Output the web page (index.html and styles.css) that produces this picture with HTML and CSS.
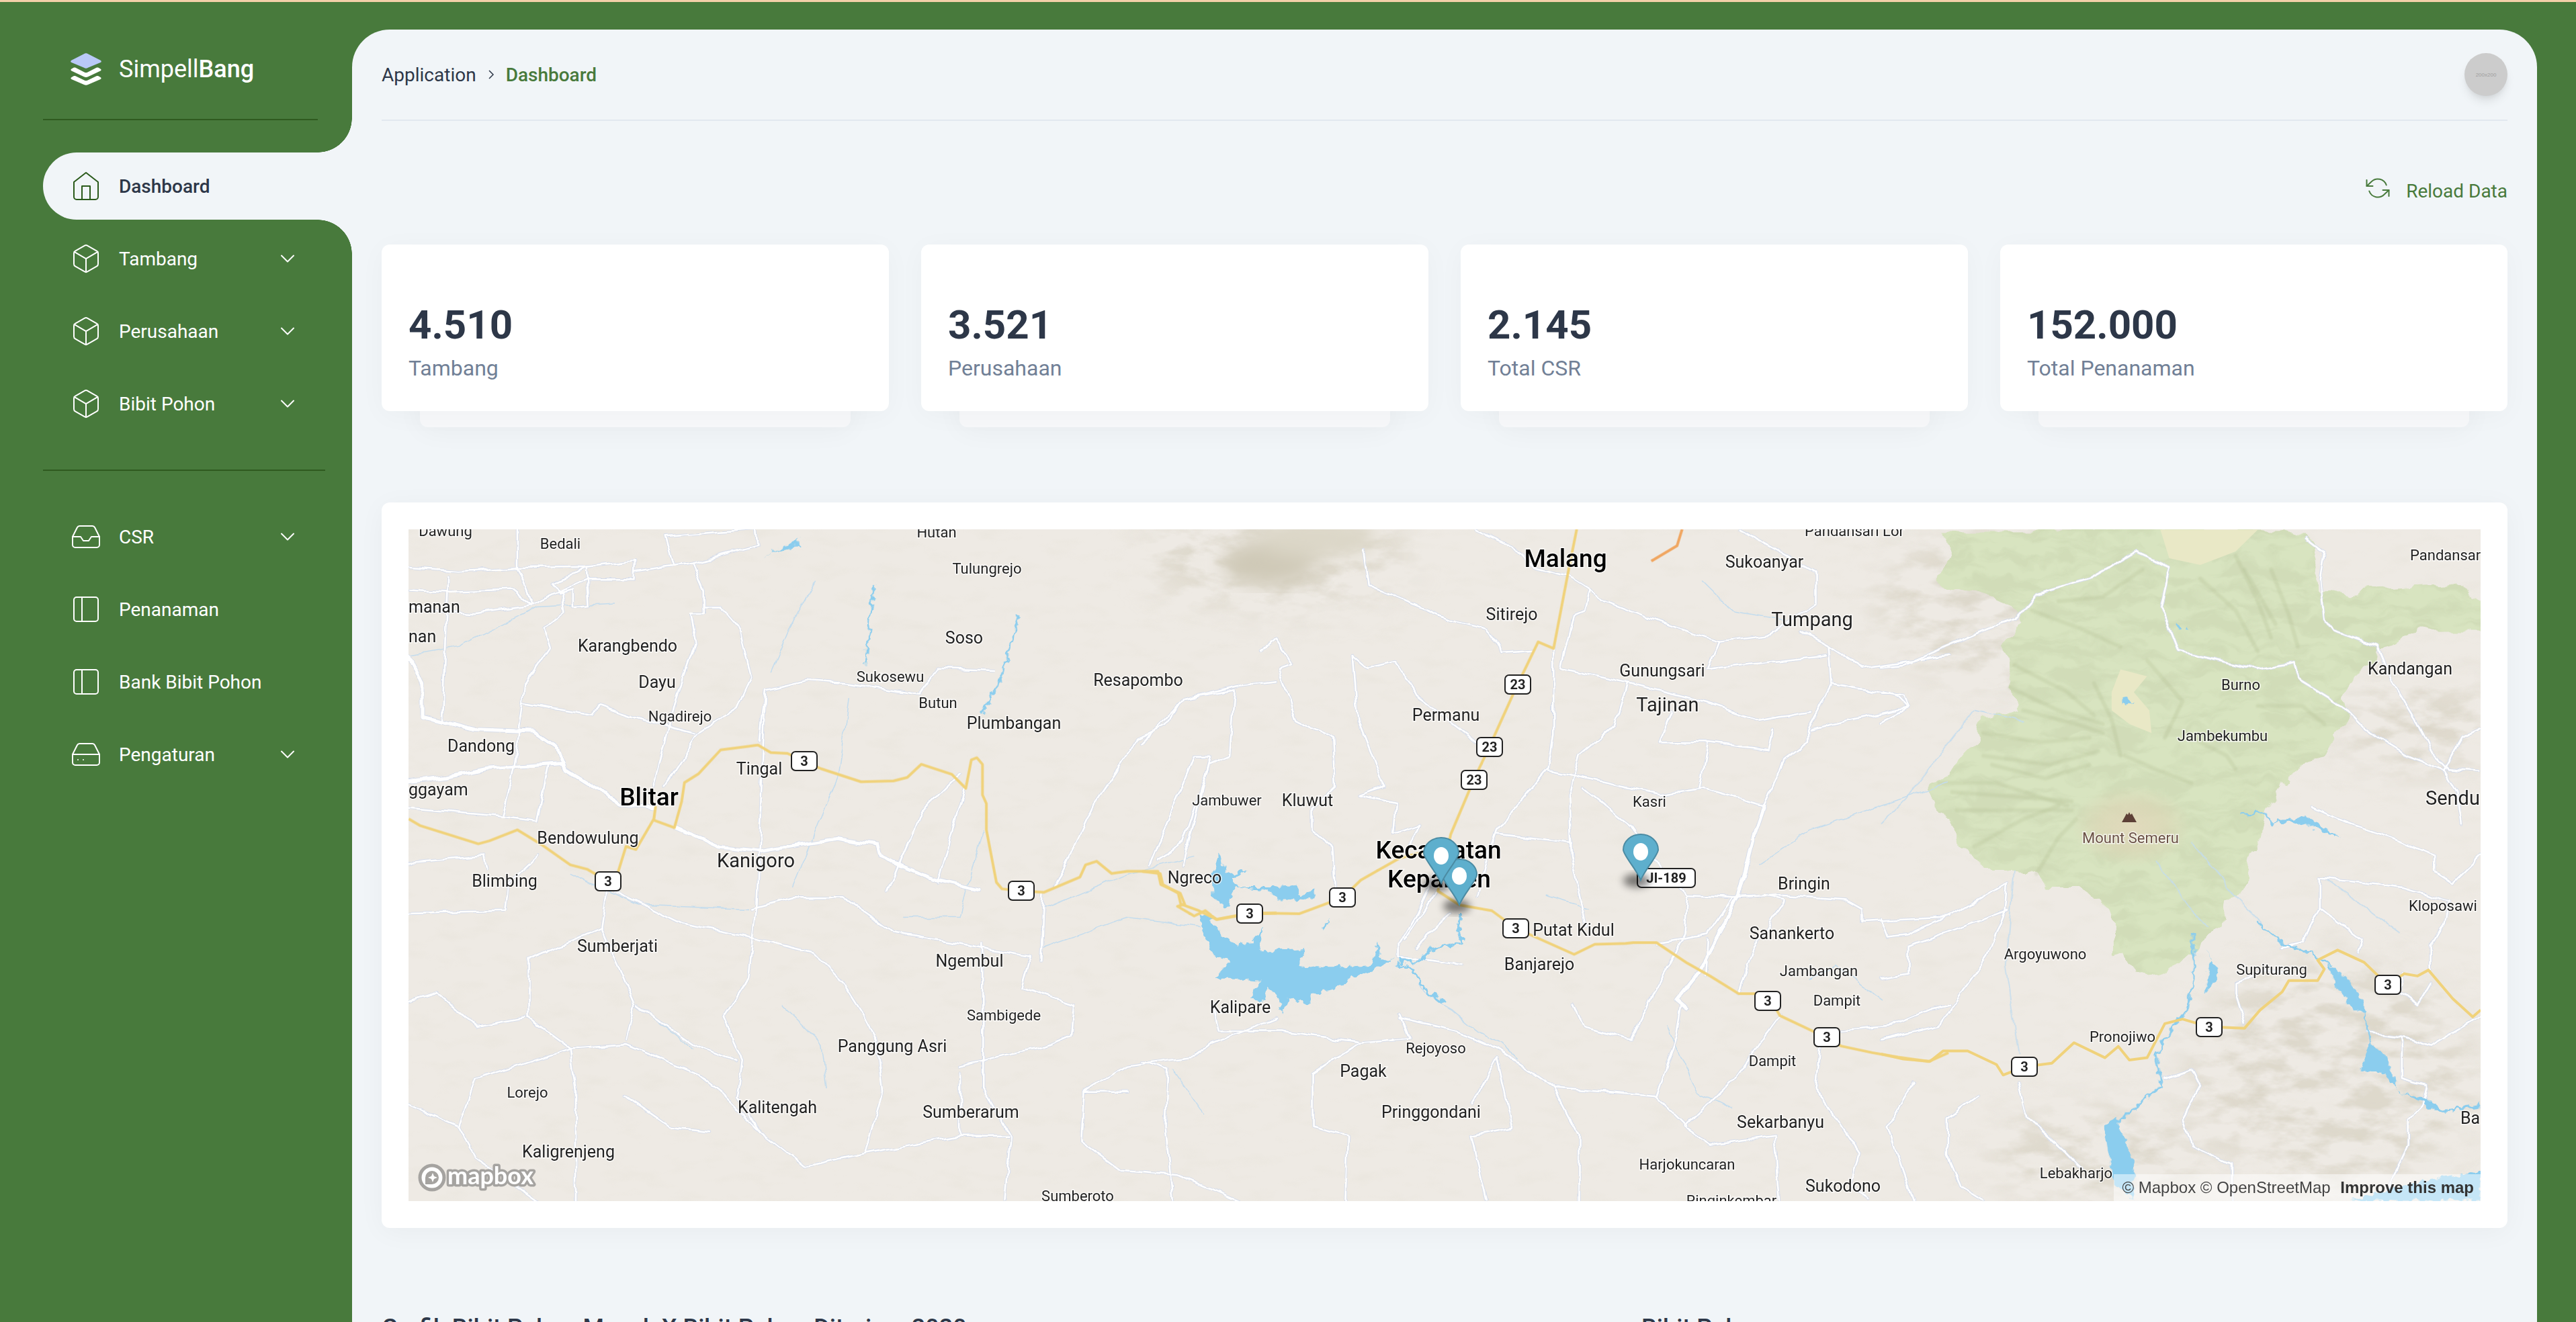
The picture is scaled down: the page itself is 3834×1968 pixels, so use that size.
FILE: index.html
```html
<!DOCTYPE html>
<html lang="en">
<head>
  <meta charset="UTF-8" />
  <meta name="viewport" content="width=device-width, initial-scale=1.0"/>
  <title>SimpellBang - Dashboard</title>
  <link rel="stylesheet" href="styles.css">
</head>
<body>

<aside class="sidebar">
  <div class="logo">
    <svg class="logo-mark" viewBox="0 0 48 48">
      <path class="logo-top" d="M21 1.2a6 6 0 0 1 6 0l18.6 9.6c1.6.9 1.6 2.4 0 3.300L27 21.800a6 6 0 0 1-6 0L2.400 14.100c-1.600-.9-1.600-2.400 0-3.300z"/>
      <path d="M2.500 23.500l3-1.700c1-.5 2-.5 3 0l13.500 7c1.300.6 2.700.6 4 0l13.500-7c1-.5 2-.5 3 0l3 1.700c1.500.9 1.500 2.200 0 3L27 35.200a6.500 6.500 0 0 1-6 0L2.500 26.500c-1.500-.8-1.500-2.100 0-3z"/>
      <path d="M2.500 36l3-1.700c1-.5 2-.5 3 0l13.500 6.500c1.300.6 2.700.6 4 0l13.500-6.500c1-.5 2-.5 3 0l3 1.700c1.500.9 1.500 2.200 0 3L27 47a6.500 6.500 0 0 1-6 0L2.500 39c-1.500-.8-1.500-2.100 0-3z"/>
    </svg>
    <span class="logo-text">Simpell<b>Bang</b></span>
  </div>

  <ul class="nav">
    <li class="nav-item active">
      <svg class="nav-icon" viewBox="0 0 24 24"><path d="M3 9l9-7 9 7v11a2 2 0 0 1-2 2H5a2 2 0 0 1-2-2z"/><polyline points="9 22 9 12 15 12 15 22"/></svg>
      <span>Dashboard</span>
    </li>
    <li class="nav-item">
      <svg class="nav-icon" viewBox="0 0 24 24"><path d="M21 16V8a2 2 0 0 0-1-1.730l-7-4a2 2 0 0 0-2 0l-7 4A2 2 0 0 0 3 8v8a2 2 0 0 0 1 1.730l7 4a2 2 0 0 0 2 0l7-4A2 2 0 0 0 21 16z"/><polyline points="3.270 6.960 12 12.010 20.730 6.960"/><line x1="12" y1="22.080" x2="12" y2="12"/></svg>
      <span>Tambang</span>
      <svg class="nav-arrow" viewBox="0 0 24 24"><polyline points="6 9 12 15 18 9"/></svg>
    </li>
    <li class="nav-item">
      <svg class="nav-icon" viewBox="0 0 24 24"><path d="M21 16V8a2 2 0 0 0-1-1.730l-7-4a2 2 0 0 0-2 0l-7 4A2 2 0 0 0 3 8v8a2 2 0 0 0 1 1.730l7 4a2 2 0 0 0 2 0l7-4A2 2 0 0 0 21 16z"/><polyline points="3.270 6.960 12 12.010 20.730 6.960"/><line x1="12" y1="22.080" x2="12" y2="12"/></svg>
      <span>Perusahaan</span>
      <svg class="nav-arrow" viewBox="0 0 24 24"><polyline points="6 9 12 15 18 9"/></svg>
    </li>
    <li class="nav-item">
      <svg class="nav-icon" viewBox="0 0 24 24"><path d="M21 16V8a2 2 0 0 0-1-1.730l-7-4a2 2 0 0 0-2 0l-7 4A2 2 0 0 0 3 8v8a2 2 0 0 0 1 1.730l7 4a2 2 0 0 0 2 0l7-4A2 2 0 0 0 21 16z"/><polyline points="3.270 6.960 12 12.010 20.730 6.960"/><line x1="12" y1="22.080" x2="12" y2="12"/></svg>
      <span>Bibit Pohon</span>
      <svg class="nav-arrow" viewBox="0 0 24 24"><polyline points="6 9 12 15 18 9"/></svg>
    </li>
  </ul>

  <div class="nav-divider"></div>

  <ul class="nav">
    <li class="nav-item">
      <svg class="nav-icon" viewBox="0 0 24 24"><polyline points="22 12 16 12 14 15 10 15 8 12 2 12"/><path d="M5.450 5.110L2 12v6a2 2 0 0 0 2 2h16a2 2 0 0 0 2-2v-6l-3.450-6.890A2 2 0 0 0 16.760 4H7.240a2 2 0 0 0-1.790 1.110z"/></svg>
      <span>CSR</span>
      <svg class="nav-arrow" viewBox="0 0 24 24"><polyline points="6 9 12 15 18 9"/></svg>
    </li>
    <li class="nav-item">
      <svg class="nav-icon" viewBox="0 0 24 24"><rect x="3" y="3" width="18" height="18" rx="2" ry="2"/><line x1="9" y1="3" x2="9" y2="21"/></svg>
      <span>Penanaman</span>
    </li>
    <li class="nav-item">
      <svg class="nav-icon" viewBox="0 0 24 24"><rect x="3" y="3" width="18" height="18" rx="2" ry="2"/><line x1="9" y1="3" x2="9" y2="21"/></svg>
      <span>Bank Bibit Pohon</span>
    </li>
    <li class="nav-item">
      <svg class="nav-icon" viewBox="0 0 24 24"><line x1="22" y1="12" x2="2" y2="12"/><path d="M5.450 5.110L2 12v6a2 2 0 0 0 2 2h16a2 2 0 0 0 2-2v-6l-3.450-6.890A2 2 0 0 0 16.760 4H7.240a2 2 0 0 0-1.790 1.110z"/><line x1="6" y1="16" x2="6.010" y2="16"/><line x1="10" y1="16" x2="10.010" y2="16"/></svg>
      <span>Pengaturan</span>
      <svg class="nav-arrow" viewBox="0 0 24 24"><polyline points="6 9 12 15 18 9"/></svg>
    </li>
  </ul>
</aside>

<main class="content">
  <div class="topbar">
    <div class="breadcrumb">
      <span>Application</span>
      <svg class="crumb-sep" viewBox="0 0 24 24"><polyline points="9 18 15 12 9 6"/></svg>
      <span class="crumb-active">Dashboard</span>
    </div>
    <div class="avatar">200x200</div>
  </div>

  <div class="reload-row">
    <svg class="reload-icon" viewBox="0 0 24 24"><polyline points="1 4 1 10 7 10"/><polyline points="23 20 23 14 17 14"/><path d="M20.490 9A9 9 0 0 0 5.640 5.640L1 10m22 4l-4.640 4.360A9 9 0 0 1 3.510 15"/></svg>
    <span>Reload Data</span>
  </div>

  <div class="stats">
    <div class="stat"><div class="stat-card"><div class="stat-num">4.510</div><div class="stat-label">Tambang</div></div></div>
    <div class="stat"><div class="stat-card"><div class="stat-num">3.521</div><div class="stat-label">Perusahaan</div></div></div>
    <div class="stat"><div class="stat-card"><div class="stat-num">2.145</div><div class="stat-label">Total CSR</div></div></div>
    <div class="stat"><div class="stat-card"><div class="stat-num">152.000</div><div class="stat-label">Total Penanaman</div></div></div>
  </div>

  <div class="map-card">
    <div class="map">
      <!-- viewBox is in page pixels, the three road groups are traced per map area -->
      <svg class="map-svg" viewBox="608 788 3084 1000">
        <defs>
          <filter id="mottle" x="0" y="0" width="100%" height="100%">
            <feTurbulence type="fractalNoise" baseFrequency="0.02 0.05" numOctaves="3" seed="7"/>
            <feColorMatrix values="0 0 0 0 .72  0 0 0 0 .69  0 0 0 0 .58  3 0 0 0 -1.500"/>
          </filter>
          <filter id="mottle-hill" x="0" y="0" width="100%" height="100%">
            <feTurbulence type="fractalNoise" baseFrequency="0.018 0.04" numOctaves="4" seed="21"/>
            <feColorMatrix values="0 0 0 0 .58  0 0 0 0 .54  0 0 0 0 .42  3.600 0 0 0 -1.500"/>
          </filter>
          <filter id="mottle-forest" x="0" y="0" width="100%" height="100%">
            <feTurbulence type="fractalNoise" baseFrequency="0.016 0.05" numOctaves="4" seed="11"/>
            <feColorMatrix values="0 0 0 0 .55  0 0 0 0 .62  0 0 0 0 .40  4 0 0 0 -1.650"/>
          </filter>
          <filter id="wobble-sm" filterUnits="userSpaceOnUse" x="608" y="788" width="3084" height="1000">
            <feTurbulence type="fractalNoise" baseFrequency="0.035" numOctaves="2" seed="4"/>
            <feDisplacementMap in="SourceGraphic" scale="11" xChannelSelector="R" yChannelSelector="G"/>
          </filter>
          <filter id="wobble-water" filterUnits="userSpaceOnUse" x="608" y="788" width="3084" height="1000">
            <feTurbulence type="fractalNoise" baseFrequency="0.09" numOctaves="2" seed="9"/>
            <feDisplacementMap in="SourceGraphic" scale="14" xChannelSelector="R" yChannelSelector="G"/>
          </filter>
          <filter id="wobble-lg" filterUnits="userSpaceOnUse" x="608" y="788" width="3084" height="1000">
            <feTurbulence type="fractalNoise" baseFrequency="0.025" numOctaves="3" seed="3"/>
            <feDisplacementMap in="SourceGraphic" scale="32" xChannelSelector="R" yChannelSelector="G"/>
          </filter>
          <filter id="blur-lg"><feGaussianBlur stdDeviation="14"/></filter>
          <filter id="blur-mask" filterUnits="userSpaceOnUse" x="608" y="788" width="3084" height="1000"><feGaussianBlur stdDeviation="30"/></filter>
          <filter id="blur-sm"><feGaussianBlur stdDeviation="2"/></filter>
          <filter id="blur-pin"><feGaussianBlur stdDeviation="6"/></filter>
          <radialGradient id="summit">
            <stop offset="0" stop-color="#e2dabd"/>
            <stop offset=".55" stop-color="#dcd6b6" stop-opacity=".7"/>
            <stop offset="1" stop-color="#dcd6b6" stop-opacity="0"/>
          </radialGradient>
          <mask id="hill-mask" maskUnits="userSpaceOnUse" x="608" y="788" width="3084" height="1000">
            <g filter="url(#blur-mask)" fill="white">
              <ellipse cx="1900" cy="830" rx="200" ry="75"/>
              <ellipse cx="3470" cy="1600" rx="210" ry="170"/>
              <ellipse cx="3120" cy="1720" rx="160" ry="70"/>
              <ellipse cx="3010" cy="900" rx="220" ry="120"/>
              <ellipse cx="3600" cy="1080" rx="120" ry="70"/>
            </g>
          </mask>
          <clipPath id="forest-clip">
            <polygon transform="translate(2800 760) scale(.6594 .676)" points="135,42 960,42 990,150 1000,180 1150,170 1300,160 1353,190 1353,270 1200,270 1130,310 1080,350 1040,420 1050,470 1000,530 900,600 870,660 860,720 830,800 780,860 770,910 700,970 640,1020 570,1025 555,960 520,970 520,880 450,830 380,830 300,790 220,790 170,720 130,670 105,620 215,510 215,460 310,440 290,360 270,300 320,240 240,190 130,155 160,100"/>
          </clipPath>
          <symbol id="pin" overflow="visible">
            <path d="M0 0C-6-15-26-37-26-45A26 23 0 1 1 26-45C26-37 6-15 0 0Z"/>
          </symbol>

          <g id="roads-west" transform="translate(600 780) scale(.8291 .6505)">
            <polyline points="10,100 100,108 210,100 330,98 415,85 413,125 330,125 230,185 130,205 70,200 10,190"/>
            <polyline points="10,150 85,155 195,150 230,185"/>
            <polyline points="205,12 205,100 215,130 232,185"/>
            <polyline points="330,98 335,185 305,188 305,150 280,158 270,135 330,98"/>
            <polyline points="415,110 520,90 635,50 632,12 470,28 485,95"/>
            <polyline points="520,90 540,150 540,205 515,205 525,270 490,400 450,600"/>
            <polyline points="540,190 570,190 600,235 605,250 625,350 600,420 530,480 470,600"/>
            <polyline points="80,120 70,450"/>
            <polyline points="215,410 200,550 180,670 240,680 260,550"/>
            <polyline points="10,650 180,670"/>
            <polyline points="220,365 265,280 255,240 290,205 285,160"/>
            <polyline points="220,365 215,410 340,438 350,415 420,445 525,480"/>
            <polyline points="640,500 650,380 725,358 800,365 925,390 960,330 1060,335"/>
            <polyline points="650,390 635,870 620,1040 575,1130 610,1230 600,1310 640,1390"/>
            <polyline points="380,840 500,915 620,945 735,980 790,1050 830,1130 850,1180 860,1300 830,1440"/>
            <polyline points="625,880 700,855 790,855 880,935 1000,960 1125,990 1110,1060 1205,1100 1200,1170 1145,1200 1080,1215 1000,1240"/>
            <polyline points="1040,960 1040,1290 1090,1400 1080,1550"/>
            <polyline points="1150,840 1145,1000"/>
            <polyline points="365,835 355,925 225,995 225,1130 300,1200 310,1300 310,1550"/>
            <polyline points="300,1200 130,1270 100,1380 130,1450 240,1550"/>
            <polyline points="300,1200 400,1190 530,1260 570,1300 640,1390 720,1470"/>
            <polyline points="355,925 385,1010 415,1100 400,1180"/>
            <polyline points="1220,1300 1215,1410 1290,1480 1390,1490 1500,1550"/>
            <polyline points="10,775 145,760 150,790"/>
            <polyline points="10,890 185,885 190,820 240,760"/>
            <polyline points="960,820 1010,600"/>
            <polyline points="870,840 930,660 1000,570"/>
            <polyline points="1170,830 1240,640 1320,490 1370,460 1400,400 1500,370 1568,360"/>
            <polyline points="1340,780 1420,530 1450,530 1400,780"/>
            <polyline points="1000,1255 1000,1400 1085,1400"/>
            <polyline points="1300,1300 1220,1300 1300,1240 1420,1220 1450,1190 1568,1130"/>
            <polyline points="720,1470 830,1440"/>
            <polyline points="10,1090 60,1070 130,1150 220,1130"/>
            <polyline points="10,1330 100,1380"/>
            <polyline points="420,1100 520,1190 600,1230"/>
            <polyline points="400,1310 480,1380 550,1390"/>
            <polyline points="830,1440 1000,1400"/>
          </g>
          <g id="roads-mid" transform="translate(1700 780) scale(.7653 .6505)">
            <polyline points="650,12 720,50 760,100 830,120 870,150 900,175 1020,230 1120,270 1220,255 1310,180 1310,110 1160,12"/>
            <polyline points="870,150 860,200 840,210 815,330 945,365 920,460 850,530 830,620 835,760 865,920"/>
            <polyline points="430,60 440,140 600,220 670,240 700,295 760,290"/>
            <polyline points="800,285 800,480 790,560 690,700 650,850"/>
            <polyline points="1210,645 1250,540 1295,500 1295,470 1340,370 1335,280 1280,245"/>
            <polyline points="1335,280 1400,330 1568,300"/>
            <polyline points="1340,365 1480,395 1490,420 1395,445 1300,470"/>
            <polyline points="1120,270 1100,330 1330,300"/>
            <polyline points="945,365 1100,410 1200,450 1300,430"/>
            <polyline points="1100,500 1085,605"/>
            <polyline points="1100,500 1220,517 1228,470"/>
            <polyline points="1005,500 1030,430"/>
            <polyline points="1005,500 1100,500"/>
            <polyline points="790,565 1010,620 1090,605 1210,645"/>
            <polyline points="860,605 950,690 1010,790 1060,850 1150,855 1250,850 1370,860 1400,880 1400,910 1568,900"/>
            <polyline points="1060,850 1055,940 1000,1060 950,1180 860,1150 840,1100"/>
            <polyline points="690,710 770,720 835,730"/>
            <polyline points="410,300 440,330 490,315 520,360 535,395 640,490 680,530"/>
            <polyline points="230,290 260,265 290,320 265,330 300,450 370,490 375,600 330,650 330,700 370,740 375,830 400,850"/>
            <polyline points="410,300 420,450 470,600 420,620 495,640 490,710 540,690 520,740"/>
            <polyline points="620,1010 500,990 500,960 530,900 590,750"/>
            <polyline points="570,840 510,950"/>
            <polyline points="600,890 530,970"/>
            <polyline points="500,1130 610,1160 690,1200 800,1290 1000,1310 1040,1170 1050,1100"/>
            <polyline points="690,1220 720,1380 640,1400 670,1550"/>
            <polyline points="690,1220 640,1330"/>
            <polyline points="500,1120 520,1180 420,1190 330,1260 330,1380 400,1400 395,1550"/>
            <polyline points="140,1100 150,1160 270,1160 420,1185"/>
            <polyline points="0,1230 50,1250 45,1380 60,1550"/>
            <polyline points="1240,1125 1150,1270 1055,1380 1105,1420 1230,1400 1240,1550"/>
            <polyline points="1320,1190 1310,1290 1395,1440 1380,1510 1410,1550"/>
            <polyline points="1360,1160 1450,1150 1530,1110 1568,1100"/>
            <polyline points="1150,855 1100,940 1000,960"/>
            <polyline points="1210,850 1250,860 1190,970 1160,1075"/>
            <polyline points="1100,950 1095,1035"/>
            <polyline points="0,500 60,430 80,400 180,380 170,530 130,550 120,590 80,730 30,770"/>
            <polyline points="800,1290 850,1400 850,1550"/>
            <polyline points="1000,1310 1060,1380"/>
            <polyline points="1500,1280 1450,1380 1500,1550"/>
          </g>
          <g id="roads-east" transform="translate(2800 760) scale(.6594 .676)">
            <polyline points="0,345 50,340 240,260 300,240 350,185 470,150 575,92 650,125 630,210 670,310 740,325 850,350 930,335 940,370 1040,430 1090,480 1190,540 1270,570 1300,620 1310,690"/>
            <polyline points="960,60 1000,90 990,150 1000,240 1020,265 1120,300 1150,370 1200,450 1240,530 1280,570"/>
            <polyline points="0,465 60,435 30,405 0,405"/>
            <polyline points="1280,570 1353,575"/>
            <polyline points="1270,570 1310,500 1353,480"/>
            <polyline points="975,655 1030,680 1150,720 1250,760 1250,795 1290,820 1353,760"/>
            <polyline points="990,810 990,875 1085,945 1075,975"/>
            <polyline points="990,810 1090,820 1180,830 1280,860 1270,910 1240,960 1240,1012"/>
            <polyline points="990,875 950,950 905,960"/>
            <polyline points="0,1165 130,1135 240,980 280,880 285,820 180,880 60,935 15,940 0,900"/>
            <polyline points="285,880 150,930 60,960 60,1020 0,1030"/>
            <polyline points="800,1040 800,1060 820,1130"/>
            <polyline points="800,1040 870,1010 920,1020"/>
            <polyline points="1180,1020 1170,1060 1210,1090 1240,1040"/>
            <polyline points="1100,1150 1180,1160 1240,1180 1353,1115"/>
            <polyline points="1175,1160 1175,1250 1230,1265 1220,1310 1190,1340 1190,1400 1130,1520"/>
            <polyline points="310,1260 330,1340 410,1410 450,1450"/>
            <polyline points="220,1290 150,1340 150,1420 180,1490 230,1520"/>
            <polyline points="640,1250 700,1230 720,1270 680,1340 700,1400 790,1440 790,1520"/>
          </g>
          <g id="roads-main">
            <polyline transform="translate(600 780) scale(.8291 .6505)" points="10,300 35,370 35,440 130,470 235,475 275,510 290,560 390,640 450,650"/>
            <polyline transform="translate(600 780) scale(.8291 .6505)" points="10,590 80,580 150,560 285,548"/>
            <polyline transform="translate(600 780) scale(.8291 .6505)" points="490,695 570,740 640,750 780,720 850,735 855,760 960,815 1035,838"/>
            <polyline transform="translate(1700 780) scale(.7653 .6505)" points="1210,645 1190,715 1160,850 1130,920 1080,1030 1040,1090 1060,1110"/>
          </g>
        </defs>

        <rect x="608" y="788" width="3084" height="1000" fill="#eeeae4"/>
        <rect x="608" y="788" width="3084" height="1000" filter="url(#mottle)" opacity=".13"/>

        <!-- hill shade -->
        <g mask="url(#hill-mask)">
          <rect x="608" y="788" width="3084" height="1000" filter="url(#mottle-hill)" opacity=".42"/>
        </g>
        <g class="hills" filter="url(#blur-lg)">
          <ellipse cx="1890" cy="838" rx="70" ry="34" fill="#cfc9b7"/>
          <ellipse cx="1960" cy="800" rx="90" ry="30" fill="#dcd7c8"/>
        </g>

        <!-- forest round Semeru -->
        <g filter="url(#wobble-lg)">
          <g transform="translate(2800 760) scale(.6594 .676)">
            <polygon class="forest" points="135,42 960,42 990,150 1000,180 1150,170 1300,160 1353,190 1353,270 1200,270 1130,310 1080,350 1040,420 1050,470 1000,530 900,600 870,660 860,720 830,800 780,860 770,910 700,970 640,1020 570,1025 555,960 520,970 520,880 450,830 380,830 300,790 220,790 170,720 130,670 105,620 215,510 215,460 310,440 290,360 270,300 320,240 240,190 130,155 160,100"/>
          </g>
          <g clip-path="url(#forest-clip)">
            <rect x="2800" y="788" width="892" height="720" filter="url(#mottle-forest)" opacity=".36"/>
          </g>
        </g>
        <g transform="translate(2800 760) scale(.6594 .676)">
          <g class="ridges" filter="url(#blur-sm)">
            <polyline points="300,340 420,400 480,450"/><polyline points="290,390 400,440 500,470"/>
            <polyline points="230,490 360,510 470,500"/><polyline points="230,540 380,560 490,530"/>
            <polyline points="130,600 260,600 420,650"/><polyline points="170,660 300,660 430,660"/>
            <polyline points="210,740 320,680 400,650"/><polyline points="350,800 400,720 440,680"/>
            <polyline points="800,100 850,200 880,280"/><polyline points="720,150 800,220 850,310"/>
            <polyline points="880,130 920,230 940,300"/><polyline points="600,330 680,420 640,500"/>
            <polyline points="700,500 780,540 800,570"/><polyline points="550,540 620,570 700,600"/>
            <polyline points="340,220 450,260 540,300"/><polyline points="400,200 500,190 590,130"/>
            <polyline points="480,380 520,460 540,540"/><polyline points="850,430 950,430 1000,470"/>
            <polyline points="320,440 440,470 500,490"/><polyline points="160,620 300,630 430,640"/>
            <polyline points="250,560 370,590 470,560"/><polyline points="820,130 890,250"/>
          </g>
          <polygon class="sand" points="630,42 850,42 800,90 720,120 650,105"/>
          <polygon class="sand" points="540,350 600,365 570,400 605,440 610,490 560,470 520,440 520,400"/>
          <ellipse cx="565" cy="695" rx="135" ry="90" fill="url(#summit)"/>
        </g>

        <!-- streams -->
        <g filter="url(#wobble-sm)">
          <g class="map-streams" transform="translate(1700 780) scale(.7653 .6505)">
            <polyline points="540,1050 555,1080 600,1110 650,1160 700,1190 730,1225"/>
            <polyline points="1200,780 1300,700 1450,640 1568,590"/>
            <polyline points="1090,130 1150,200 1250,220"/>
            <polyline points="785,850 870,880"/>
            <polyline points="1300,1040 1350,1010 1440,1090"/>
            <polyline points="1020,1150 1080,1300 1150,1340"/>
            <polyline points="60,1250 120,1350"/>
          </g>
          <g class="map-streams" transform="translate(600 780) scale(.8291 .6505)">
            <polyline points="660,340 690,250 740,130"/>
            <polyline points="10,300 100,280 240,190 380,180"/>
            <polyline points="700,830 780,580 800,400"/>
            <polyline points="300,800 420,870 620,880"/>
            <polyline points="900,900 1000,900 1040,700"/>
            <polyline points="1150,880 1300,800 1420,760"/>
            <polyline points="450,1130 520,1200"/>
            <polyline points="680,1100 750,1190 760,1290"/>
            <polyline points="1145,970 1300,900 1430,920"/>
          </g>
          <g class="map-streams" transform="translate(2800 760) scale(.6594 .676)">
            <polyline points="0,690 60,630 210,440 320,465"/>
            <polyline points="300,790 280,1000 310,1200"/>
            <polyline points="620,770 700,880 740,920"/>
            <polyline points="700,730 800,850 860,910"/>
            <polyline points="1000,810 1100,880 1170,930"/>
          </g>

          <use href="#roads-west" class="road-casing"/>
          <use href="#roads-mid" class="road-casing"/>
          <use href="#roads-east" class="road-casing"/>
          <use href="#roads-main" class="road-casing main"/>
          <use href="#roads-west" class="road-core"/>
          <use href="#roads-mid" class="road-core"/>
          <use href="#roads-east" class="road-core"/>
          <use href="#roads-main" class="road-core main"/>
        </g>

        <!-- water -->
        <g class="map-water" filter="url(#wobble-water)">
          <g transform="translate(1700 780) scale(.7653 .6505)">
            <polygon points="110,895 128,895 150,935 185,965 210,960 235,925 228,975 265,975 315,970 305,1010 355,1015 395,1015 445,1010 460,955 465,1000 490,995 450,1022 405,1035 390,1058 330,1078 322,1098 285,1082 272,1122 262,1078 245,1062 240,1092 205,1085 232,1045 195,1042 140,1042 172,1000 140,990 122,945"/>
            <polygon points="150,755 165,800 205,795 175,810 190,830 250,830 300,825 305,850 340,835 335,855 300,860 265,860 240,838 180,830 165,880 135,850 135,810"/>
            <polygon points="350,920 365,905 355,925"/>
            <polyline class="river" points="495,1005 530,1020 545,1060 590,1100"/>
            <polyline class="river" points="620,890 615,930 622,955 590,965 555,975 545,1000 500,1002"/>
          </g>
          <g transform="translate(600 780) scale(.8291 .6505)">
            <polygon points="645,78 710,32 712,50 665,65"/>
            <polyline class="river" points="845,135 835,260 830,320"/>
            <polyline class="river" points="1040,435 1075,345 1105,210"/>
          </g>
          <g transform="translate(2800 760) scale(.6594 .676)">
            <polygon points="1005,995 1040,1020 1090,1080 1090,1110 1060,1090 1020,1040"/>
            <polygon points="1105,1175 1135,1195 1170,1280 1240,1300 1270,1320 1353,1305 1353,1312 1260,1325 1180,1285 1130,1240 1080,1230"/>
            <polygon points="500,1350 530,1340 570,1430 570,1520 525,1480 510,1390"/>
            <polygon points="1060,1520 1200,1480 1353,1455 1353,1520"/>
            <polygon points="735,970 765,1020 730,1065 745,985"/>
            <polygon points="880,685 960,675 1040,720 990,705 960,690"/>
            <polygon points="545,408 570,420 545,430"/>
            <polygon points="665,250 675,255 668,262"/>
            <polygon points="690,255 698,265 688,265"/>
            <polyline class="river" points="705,930 705,1030 690,1100 650,1150 620,1200 630,1270 590,1300 530,1350"/>
            <polyline class="river" points="850,905 910,955 980,980 1020,1000"/>
            <polyline class="river" points="1090,1110 1105,1175"/>
            <polyline class="river" points="810,670 860,665 890,690"/>
          </g>
        </g>

        <!-- highway 3 and 23 -->
        <g class="map-highway">
          <polyline transform="translate(600 780) scale(.8291 .6505)" points="10,675 30,690 135,732 155,725 205,700 250,735 300,780 330,790 368,818 385,800 400,738 418,745 450,675 453,648 450,678 487,695 500,635 505,592 530,572 570,517 637,506 660,523 690,525 720,543 750,560 822,590 880,588 905,580 930,550 985,573 1010,605 1020,540 1030,535 1040,550 1040,620 1047,640 1047,700 1065,820 1075,835 1110,840 1150,843 1215,808 1225,780 1245,772 1272,800 1300,795 1355,795 1360,825 1395,845 1403,870 1390,875 1420,897 1440,885 1460,905 1520,892 1568,890"/>
          <g transform="translate(1700 780) scale(.7653 .6505)">
            <polyline points="0,795 35,800 40,825 70,845 75,870 110,885 145,905 210,890 305,892 390,855 425,815 500,765 590,738"/>
            <polyline points="845,12 830,100 800,285 770,270 730,367 675,510 645,585 600,710 575,840 617,872 680,885 726,925 840,985 880,962 940,960 955,958 1000,958 1060,1005 1105,1035 1160,1075 1216,1075 1240,1125 1330,1175 1360,1195 1420,1210 1470,1220 1530,1230 1568,1210"/>
            <polyline class="motorway" points="1050,12 1040,50 990,85"/>
          </g>
          <polyline transform="translate(2800 760) scale(.6594 .676)" points="0,1197 50,1208 110,1213 140,1190 195,1190 260,1220 275,1243 323,1225 385,1217 435,1172 505,1205 535,1180 560,1210 600,1205 640,1130 680,1120 740,1137 820,1140 855,1100 905,1060 920,1035 985,1035 1000,1010 985,990 1030,968 1090,995 1143,1045 1180,1020 1210,1025 1235,1012 1290,1075 1335,1115 1353,1100"/>
        </g>

        <!-- place names -->
        <g class="map-labels">
          <text class="sm" x="663" y="790">Dawung</text>
          <text class="sm" x="834" y="809">Bedali</text>
          <text class="sm" x="1394" y="792">Hutan</text>
          <text class="sm" x="1469" y="846">Tulungrejo</text>
          <text class="md" x="1435" y="949">Soso</text>
          <text class="sm" x="1325" y="1007">Sukosewu</text>
          <text class="sm" x="1396" y="1046">Butun</text>
          <text class="md" x="1509" y="1076">Plumbangan</text>
          <text class="md" x="1694" y="1012">Resapombo</text>
          <text class="md" x="934" y="961">Karangbendo</text>
          <text class="md" x="978" y="1015">Dayu</text>
          <text class="sm" x="1012" y="1066">Ngadirejo</text>
          <text class="md" x="716" y="1110">Dandong</text>
          <text class="md start" x="608" y="903">manan</text>
          <text class="md start" x="608" y="947">nan</text>
          <text class="md start" x="608" y="1175">ggayam</text>
          <text class="xl" x="966" y="1186">Blitar</text>
          <text class="md" x="1130" y="1144">Tingal</text>
          <text class="md" x="875" y="1247">Bendowulung</text>
          <text class="lg" x="1125" y="1281">Kanigoro</text>
          <text class="md" x="751" y="1311">Blimbing</text>
          <text class="md" x="919" y="1408">Sumberjati</text>
          <text class="md" x="1443" y="1430">Ngembul</text>
          <text class="sm" x="1494" y="1511">Sambigede</text>
          <text class="md" x="1328" y="1557">Panggung Asri</text>
          <text class="sm" x="785" y="1626">Lorejo</text>
          <text class="md" x="1157" y="1648">Kalitengah</text>
          <text class="md" x="1445" y="1655">Sumberarum</text>
          <text class="md" x="846" y="1714">Kaligrenjeng</text>
          <text class="sm" x="1604" y="1780">Sumberoto</text>
          <text class="sm" x="1826" y="1191">Jambuwer</text>
          <text class="md" x="1946" y="1191">Kluwut</text>
          <text class="md" x="1778" y="1306">Ngreco</text>
          <text class="md" x="1846" y="1499">Kalipare</text>
          <text class="xl" x="2330" y="831">Malang</text>
          <text class="md" x="2250" y="914">Sitirejo</text>
          <text class="md" x="2152" y="1064">Permanu</text>
          <text class="md" x="2626" y="836">Sukoanyar</text>
          <text class="lg" x="2697" y="922">Tumpang</text>
          <text class="md" x="2474" y="998">Gunungsari</text>
          <text class="lg" x="2482" y="1049">Tajinan</text>
          <text class="sm" x="2455" y="1193">Kasri</text>
          <text class="xl" x="2141" y="1265">Kecamatan</text>
          <text class="xl" x="2142" y="1308">Kepanjen</text>
          <text class="md" x="2342" y="1384">Putat Kidul</text>
          <text class="md" x="2291" y="1435">Banjarejo</text>
          <text class="md" x="2685" y="1315">Bringin</text>
          <text class="md" x="2667" y="1389">Sanankerto</text>
          <text class="sm" x="2707" y="1445">Jambangan</text>
          <text class="sm" x="2734" y="1489">Dampit</text>
          <text class="sm" x="2638" y="1579">Dampit</text>
          <text class="sm" x="2137" y="1560">Rejoyoso</text>
          <text class="md" x="2029" y="1594">Pagak</text>
          <text class="md" x="2130" y="1655">Pringgondani</text>
          <text class="md" x="2650" y="1670">Sekarbanyu</text>
          <text class="sm" x="2511" y="1733">Harjokuncaran</text>
          <text class="md" x="2743" y="1765">Sukodono</text>
          <text class="sm" x="2577" y="1787">Ringinkembar</text>
          <text class="sm" x="2760" y="790">Pandansari Lor</text>
          <text class="sm start" x="3587" y="826">Pandansari</text>
          <text class="sm" x="3335" y="1019">Burno</text>
          <text class="md" x="3587" y="995">Kandangan</text>
          <text class="sm" x="3308" y="1095">Jambekumbu</text>
          <text class="lg start" x="3610" y="1188">Sendu</text>
          <text class="sm peak" x="3171" y="1247">Mount Semeru</text>
          <text class="sm" x="3044" y="1420">Argoyuwono</text>
          <text class="sm" x="3381" y="1443">Supiturang</text>
          <text class="sm start" x="3585" y="1348">Kloposawi</text>
          <text class="sm" x="3159" y="1543">Pronojiwo</text>
          <text class="sm" x="3090" y="1746">Lebakharjo</text>
          <text class="md start" x="3662" y="1664">Ba</text>
        </g>
        <path class="peak-icon" d="M3158 1224l5-9 2-4 2 2 2-4 2 4 2-2 2 4 5 9z"/>

        <!-- road shields -->
        <g class="map-shields">
          <g transform="translate(905 1312)"><rect x="-19" y="-14" width="38" height="28" rx="6"/><text>3</text></g>
          <g transform="translate(1197 1133)"><rect x="-19" y="-14" width="38" height="28" rx="6"/><text>3</text></g>
          <g transform="translate(1520 1326)"><rect x="-19" y="-14" width="38" height="28" rx="6"/><text>3</text></g>
          <g transform="translate(1860 1360)"><rect x="-19" y="-14" width="38" height="28" rx="6"/><text>3</text></g>
          <g transform="translate(1998 1336)"><rect x="-19" y="-14" width="38" height="28" rx="6"/><text>3</text></g>
          <g transform="translate(2259 1019)"><rect x="-19" y="-14" width="38" height="28" rx="6"/><text>23</text></g>
          <g transform="translate(2217 1112)"><rect x="-19" y="-14" width="38" height="28" rx="6"/><text>23</text></g>
          <g transform="translate(2194 1161)"><rect x="-19" y="-14" width="38" height="28" rx="6"/><text>23</text></g>
          <g transform="translate(2256 1382)"><rect x="-19" y="-14" width="38" height="28" rx="6"/><text>3</text></g>
          <g transform="translate(2631 1490)"><rect x="-19" y="-14" width="38" height="28" rx="6"/><text>3</text></g>
          <g transform="translate(2719 1544)"><rect x="-19" y="-14" width="38" height="28" rx="6"/><text>3</text></g>
          <g transform="translate(3013 1588)"><rect x="-19" y="-14" width="38" height="28" rx="6"/><text>3</text></g>
          <g transform="translate(3288 1529)"><rect x="-19" y="-14" width="38" height="28" rx="6"/><text>3</text></g>
          <g transform="translate(3554 1466)"><rect x="-19" y="-14" width="38" height="28" rx="6"/><text>3</text></g>
          <g transform="translate(2480 1307)"><rect x="-43" y="-14" width="86" height="28" rx="6"/><text>JI-189</text></g>
        </g>

        <!-- markers -->
        <g class="pin-shadows" filter="url(#blur-pin)">
          <ellipse cx="2138" cy="1317" rx="20" ry="10"/>
          <ellipse cx="2168" cy="1349" rx="20" ry="10"/>
          <ellipse cx="2436" cy="1311" rx="20" ry="10"/>
        </g>
        <g class="map-pin" transform="translate(2172 1347)"><use href="#pin"/><ellipse cx="0" cy="-43" rx="11" ry="13"/></g>
        <g class="map-pin" transform="translate(2145 1315)"><use href="#pin"/><ellipse cx="0" cy="-41" rx="11" ry="13"/></g>
        <g class="map-pin" transform="translate(2442 1310)"><use href="#pin"/><ellipse cx="0" cy="-42" rx="11" ry="13"/></g>

        <!-- mapbox mark -->
        <g class="mapbox-mark">
          <circle class="ring" cx="643" cy="1753" r="18"/>
          <path class="blob" d="M633 1763v-10a10 10 0 1 1 10 10z"/>
          <path class="star" d="M644 1746l2 5 5 2-5 2-2 5-2-5-5-2 5-2z"/>
          <text x="666" y="1763">mapbox</text>
        </g>
      </svg>
      <div class="map-attrib">© Mapbox © OpenStreetMap <b>Improve this map</b></div>
    </div>
  </div>

  <div class="section-row">
    <h2 class="section-title">Grafik Bibit Pohon Masuk X Bibit Pohon Diterima 2020</h2>
    <h2 class="section-title">Bibit Pohon</h2>
  </div>
</main>

</body>
</html>
```

FILE: styles.css
```css
html, body { height: 100%; margin: 0; overflow: hidden; }
body { display: flex; box-sizing: border-box; background: #487a3c; border-top: 3px solid #f4cfa8; font-family: Roboto, sans-serif; font-size: 28px; color: #2d3748; }
ul { list-style: none; margin: 0; padding: 0; }

/* sidebar */
.sidebar { width: 524px; flex: none; padding-left: 64px; box-sizing: border-box; color: white; }
.logo { height: 176px; width: 420px; box-sizing: border-box; padding: 76px 0 0 40px; border-bottom: 2px solid #2f5a1f; display: flex; gap: 25px; margin-bottom: 48px; }
.logo-mark { width: 48px; height: 48px; fill: white; }
.logo-top { fill: #b9c9f7; }
.logo-text { font-size: 36px; font-weight: 400; line-height: 48px; }
.logo-text b { font-weight: 500; }
.nav-item { position: relative; height: 100px; margin-bottom: 8px; padding: 0 78px 0 40px; display: flex; align-items: center; gap: 25px; border-radius: 50px 0 0 50px; }
.nav-item svg { fill: none; stroke: white; stroke-linecap: round; stroke-linejoin: round; flex: none; }
.nav-icon { width: 48px; height: 48px; stroke-width: 1; }
.nav-arrow { width: 36px; height: 36px; margin-left: auto; stroke-width: 1.330; }
.nav-divider { width: 420px; height: 2px; background: #2f5a1f; margin: 48px 0; }
.nav-item.active { background: #f1f5f8; color: #2d3748; font-weight: 500; }
.nav-item.active svg { stroke: #2a5a1a; }
.nav-item.active::before, .nav-item.active::after { content: ""; position: absolute; right: 0; width: 51px; height: 51px; }
.nav-item.active::before { top: -51px; background: radial-gradient(circle at 0 0, #487a3c 50.500px, #f1f5f8 51px); }
.nav-item.active::after { bottom: -51px; background: radial-gradient(circle at 0 100%, #487a3c 50.500px, #f1f5f8 51px); }

/* main panel */
.content { flex: 1; min-width: 0; margin: 41px 58px 0 0; padding: 0 44px; background: #f1f5f8; border-radius: 56px 56px 0 0; overflow: hidden; }
.topbar { height: 136px; box-sizing: border-box; border-bottom: 2px solid #e2e8f0; display: flex; align-items: center; justify-content: space-between; }
.breadcrumb { display: flex; align-items: center; }
.crumb-sep { width: 24px; height: 24px; margin: 0 10px 0 10px; fill: none; stroke: #2d3748; stroke-width: 1.500; }
.crumb-active { color: #487a3c; font-weight: 500; }
.avatar { width: 64px; height: 64px; border-radius: 50%; background: #ccc; color: #a0a0a0; font: 8px "Liberation Sans", sans-serif; display: flex; align-items: center; justify-content: center; box-shadow: 0 10px 15px -3px rgba(0,0,0,0.1), 0 4px 6px -2px rgba(0,0,0,0.05); }
.reload-row { height: 40px; margin-top: 84px; display: flex; align-items: center; justify-content: flex-end; gap: 24px; color: #487a3c; }
.reload-icon { width: 36px; height: 36px; margin-bottom: 8px; fill: none; stroke: #487a3c; stroke-width: 1.330; stroke-linecap: round; stroke-linejoin: round; }

/* stat cards */
.stats { display: grid; grid-template-columns: repeat(4, 1fr); gap: 48px; margin-top: 60px; }
.stat { position: relative; }
.stat::before { content: ""; position: absolute; left: 57px; right: 57px; top: 24px; height: 100%; background: #f7f8fa; border-radius: 12px; box-shadow: 0 6px 40px rgba(0,0,0,0.04); }
.stat-card { position: relative; height: 248px; box-sizing: border-box; padding: 80px 40px 0; background: white; border-radius: 12px; box-shadow: 0 6px 40px rgba(0,0,0,0.03); }
.stat-num { font-size: 60px; font-weight: 700; line-height: 80px; }
.stat-label { font-size: 32px; line-height: 48px; color: #718096; }

/* map */
.map-card { margin-top: 136px; padding: 40px; background: white; border-radius: 12px; box-shadow: 0 6px 40px rgba(0,0,0,0.04); }
.map { position: relative; height: 1000px; overflow: hidden; }
.map-svg { display: block; width: 100%; height: 100%; }
.forest { fill: #d8e4c0; }
.sand { fill: #e9e8c6; }
.ridges polyline { fill: none; stroke: #a3b184; stroke-width: 6px; stroke-opacity: .2; vector-effect: non-scaling-stroke; stroke-linecap: round; }
.map-streams polyline { fill: none; stroke: #c3dcee; stroke-width: 1.500px; vector-effect: non-scaling-stroke; }
.road-casing, .road-core { fill: none; stroke-linejoin: round; stroke-linecap: round; }
.road-casing { stroke: #d7ddea; stroke-width: 4.500px; }
.road-core { stroke: #fff; stroke-width: 2.500px; }
.road-casing.main { stroke-width: 7px; }
.road-core.main { stroke-width: 5px; }
.map-svg defs polyline { vector-effect: non-scaling-stroke; }
.map-water polygon { fill: #8bcdee; }
.map-water .river { fill: none; stroke: #8bcdee; stroke-width: 3px; vector-effect: non-scaling-stroke; }
.map-highway polyline { fill: none; stroke: #f0d27b; stroke-width: 4px; stroke-linejoin: round; vector-effect: non-scaling-stroke; }
.map-highway .motorway { stroke: #f0a661; }
.map-labels text { font-family: Roboto, sans-serif; text-anchor: middle; dominant-baseline: central; fill: #222; paint-order: stroke; stroke: rgba(255,255,255,0.7); stroke-width: 3px; }
.map-labels .start { text-anchor: start; }
.map-labels .sm { font-size: 22px; }
.map-labels .md { font-size: 25px; }
.map-labels .lg { font-size: 29px; }
.map-labels .xl { font-size: 37px; font-weight: 500; fill: #000; }
.map-labels .peak { fill: #6b5146; }
.peak-icon { fill: #5d4037; }
.map-shields rect { fill: white; stroke: #222; stroke-width: 2; }
.map-shields text { font: 700 20px Roboto, sans-serif; text-anchor: middle; dominant-baseline: central; fill: #222; }
.pin-shadows ellipse { fill: rgba(0,0,0,0.5); }
.map-pin use { fill: #5eafcd; stroke: #4b8ba3; stroke-width: 2; }
.map-pin ellipse { fill: white; }
.mapbox-mark .ring { fill: white; stroke: #a5a3a0; stroke-width: 5; }
.mapbox-mark .blob { fill: #a5a3a0; }
.mapbox-mark .star { fill: white; }
.mapbox-mark text { font: 700 36px Lato, sans-serif; fill: white; stroke: #a5a3a0; stroke-width: 7px; paint-order: stroke; stroke-linejoin: round; }
.map-attrib { position: absolute; right: 0; bottom: 0; padding: 0 10px 0 12px; height: 40px; font: 24px/40px "Liberation Sans", sans-serif; color: #444; background: rgba(255,255,255,0.5); white-space: nowrap; }
.map-attrib b { margin-left: 8px; color: #333; }

/* next row, cut by the window */
.section-row { display: grid; grid-template-columns: 1827px 1fr; gap: 48px; margin-top: 127px; }
.section-title { margin: 0; font-size: 36px; font-weight: 500; line-height: 44px; }
```
